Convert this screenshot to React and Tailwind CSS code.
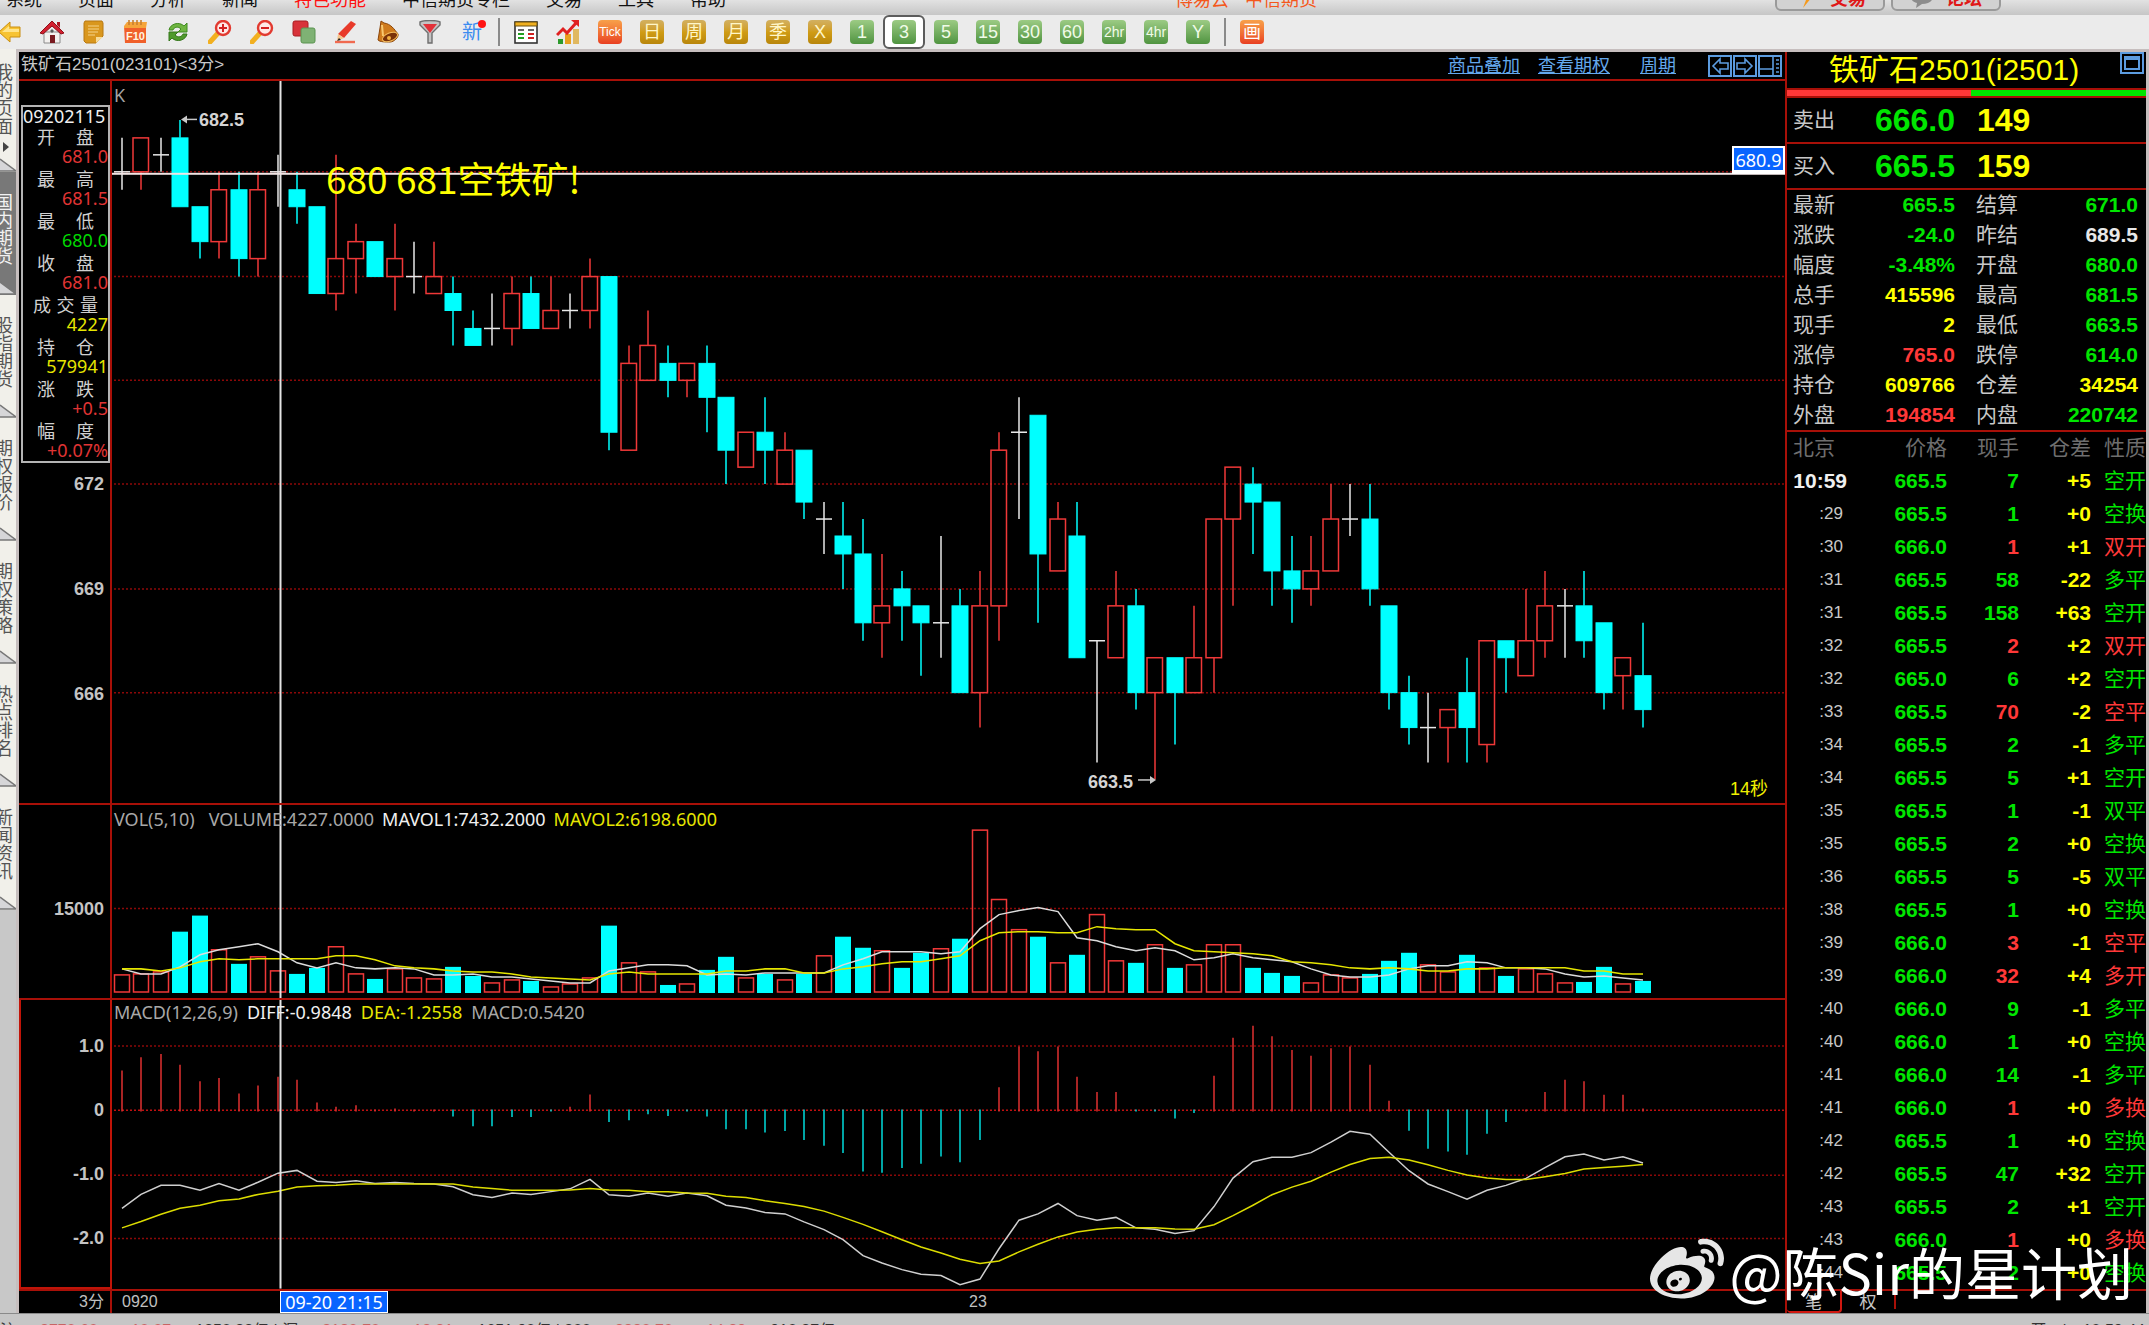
import React from "react";
import { FaWeibo } from "react-icons/fa";

const SANS = "font-['Noto_Sans','Noto_Sans_CJK_SC',sans-serif]";
const ARIAL = "font-['Liberation_Sans','Noto_Sans_CJK_SC',sans-serif]";

/* ---------- chart data: kind, high, body top, body bottom, low ---------- */
const CANDLES = [
  ["w", 682, 681, 681, 680.5], ["r", 682, 682, 681, 680.5], ["w", 682, 681.5, 681.5, 681],
  ["c", 682.5, 682, 680, 680], ["c", 680, 680, 679, 678.5], ["r", 681, 680.5, 679, 678.5],
  ["c", 681, 680.5, 678.5, 678], ["r", 681, 680.5, 678.5, 678], ["w", 681.5, 681, 681, 680],
  ["c", 681, 680.5, 680, 679.5], ["c", 680, 680, 677.5, 677.5], ["r", 681.5, 678.5, 677.5, 677],
  ["r", 679.5, 679, 678.5, 677.5], ["c", 679, 679, 678, 678], ["r", 679.5, 678.5, 678, 677],
  ["w", 679, 678, 678, 677.5], ["r", 679, 678, 677.5, 677.5], ["c", 678, 677.5, 677, 676],
  ["c", 677, 676.5, 676, 676], ["w", 677.5, 676.5, 676.5, 676], ["r", 678, 677.5, 676.5, 676],
  ["c", 678, 677.5, 676.5, 676.5], ["r", 678, 677, 676.5, 676.5], ["w", 677.5, 677, 677, 676.5],
  ["r", 678.5, 678, 677, 676.5], ["c", 678, 678, 673.5, 673], ["r", 676, 675.5, 673, 673],
  ["r", 677, 676, 675, 675], ["c", 676, 675.5, 675, 674.5], ["r", 675.5, 675.5, 675, 674.5],
  ["c", 676, 675.5, 674.5, 673.5], ["c", 674.5, 674.5, 673, 672], ["r", 673.5, 673.5, 672.5, 672.5],
  ["c", 674.5, 673.5, 673, 672], ["r", 673.5, 673, 672, 672], ["c", 673, 673, 671.5, 671],
  ["w", 671.5, 671, 671, 670], ["c", 671.5, 670.5, 670, 669], ["c", 671, 670, 668, 667.5],
  ["r", 670, 668.5, 668, 667], ["c", 669.5, 669, 668.5, 667.5], ["c", 668.5, 668.5, 668, 666.5],
  ["w", 670.5, 668, 668, 667], ["c", 669, 668.5, 666, 666], ["r", 669.5, 668.5, 666, 665],
  ["r", 673.5, 673, 668.5, 667.5], ["w", 674.5, 673.5, 673.5, 671], ["c", 674, 674, 670, 668],
  ["r", 671.5, 671, 669.5, 669.5], ["c", 671.5, 670.5, 667, 667], ["w", 667.5, 667.5, 667.5, 664],
  ["r", 669.5, 668.5, 667, 667], ["c", 669, 668.5, 666, 665.5], ["r", 667, 667, 666, 663.5],
  ["c", 667, 667, 666, 664.5], ["r", 668.5, 667, 666, 666], ["r", 671, 671, 667, 666],
  ["r", 672.5, 672.5, 671, 668.5], ["c", 672.5, 672, 671.5, 670], ["c", 671.5, 671.5, 669.5, 668.5],
  ["c", 670.5, 669.5, 669, 668], ["r", 670.5, 669.5, 669, 668.5], ["r", 672, 671, 669.5, 669.5],
  ["w", 672, 671, 671, 670.5], ["c", 672, 671, 669, 668.5], ["c", 668.5, 668.5, 666, 665.5],
  ["c", 666.5, 666, 665, 664.5], ["w", 666, 665, 665, 664], ["r", 665.5, 665.5, 665, 664],
  ["c", 667, 666, 665, 664], ["r", 667.5, 667.5, 664.5, 664], ["c", 667.5, 667.5, 667, 666],
  ["r", 669, 667.5, 666.5, 666.5], ["r", 669.5, 668.5, 667.5, 667], ["w", 669, 668.5, 668.5, 667],
  ["c", 669.5, 668.5, 667.5, 667], ["c", 668, 668, 666, 665.5], ["r", 667, 667, 666.5, 665.5],
  ["c", 668, 666.5, 665.5, 665],
];

/* Volume and MACD series share one vertical unit, see volY and macdY. */
const VOLUME = [565, 560, 556, 441, 394, 493, 532, 512, 551, 562, 545, 482, 560, 575, 548, 572, 574, 541, 567, 586, 577, 580, 599, 590, 573, 424, 530, 556, 594, 591, 550, 511, 573, 560, 577, 560, 508, 455, 485, 494, 545, 502, 490, 459, 150, 348, 434, 455, 530, 506, 392, 525, 528, 478, 545, 534, 478, 478, 545, 558, 567, 586, 565, 573, 562, 524, 502, 534, 556, 506, 543, 567, 547, 560, 586, 584, 541, 591, 580];
const VOLUME_KIND = "rrrccrcrrccrrcrrrccrrcrrrcrrcrccrcrcrccrccrcrrrcrcrrcrcrrrcccrrrcccrrcrcrrrccrc";
const MAVOL1 = [548, 560, 560, 540, 505, 491, 482, 474, 497, 530, 543, 530, 543, 547, 543, 547, 565, 565, 562, 569, 569, 574, 581, 587, 587, 552, 543, 534, 534, 539, 565, 561, 565, 557, 557, 557, 557, 535, 518, 499, 499, 499, 503, 499, 432, 391, 380, 370, 384, 456, 465, 482, 496, 487, 496, 521, 514, 504, 516, 521, 526, 548, 565, 569, 569, 565, 547, 538, 538, 526, 530, 543, 543, 548, 560, 569, 566, 573, 578];
const MAVOL2 = [547, 548, 553, 543, 526, 517, 521, 517, 517, 517, 517, 508, 508, 521, 539, 543, 547, 551, 556, 556, 560, 569, 573, 574, 577, 560, 556, 560, 560, 560, 560, 552, 551, 547, 547, 559, 559, 547, 541, 531, 526, 526, 517, 508, 465, 443, 439, 439, 443, 443, 427, 431, 435, 435, 474, 496, 499, 500, 504, 508, 526, 530, 534, 543, 548, 544, 547, 551, 552, 548, 547, 543, 543, 543, 543, 552, 552, 560, 560];
const MACD = [838, 800, 791, 822, 869, 860, 904, 881, 856, 865, 930, 942, 938, 950, 947, 950, 950, 970, 998, 998, 972, 972, 956, 942, 907, 986, 981, 964, 969, 956, 970, 1007, 1007, 1016, 1012, 1038, 1054, 1075, 1128, 1132, 1118, 1106, 1085, 1102, 1038, 886, 769, 783, 769, 856, 900, 900, 956, 956, 976, 960, 853, 744, 710, 740, 779, 796, 774, 769, 822, 925, 1011, 1063, 1071, 1080, 1020, 986, 950, 900, 865, 869, 908, 908, 947];
const DIFF = [1234, 1194, 1168, 1168, 1182, 1163, 1182, 1159, 1133, 1125, 1156, 1160, 1155, 1163, 1160, 1163, 1164, 1172, 1195, 1203, 1190, 1194, 1186, 1178, 1151, 1195, 1199, 1190, 1199, 1190, 1198, 1225, 1233, 1246, 1250, 1273, 1295, 1324, 1370, 1391, 1410, 1423, 1427, 1453, 1437, 1350, 1268, 1250, 1220, 1255, 1268, 1260, 1290, 1294, 1306, 1298, 1229, 1147, 1100, 1087, 1087, 1074, 1044, 1013, 1021, 1073, 1126, 1164, 1186, 1208, 1182, 1168, 1148, 1117, 1086, 1078, 1095, 1086, 1104];
const DEA = [1290, 1272, 1251, 1234, 1225, 1212, 1207, 1194, 1185, 1173, 1169, 1168, 1164, 1164, 1164, 1164, 1164, 1164, 1173, 1177, 1182, 1182, 1182, 1181, 1177, 1181, 1182, 1186, 1186, 1190, 1191, 1199, 1203, 1212, 1220, 1229, 1242, 1260, 1280, 1301, 1324, 1345, 1362, 1380, 1392, 1385, 1359, 1337, 1316, 1302, 1294, 1290, 1290, 1290, 1293, 1294, 1281, 1255, 1225, 1195, 1173, 1156, 1130, 1108, 1091, 1087, 1095, 1109, 1125, 1138, 1147, 1151, 1151, 1143, 1134, 1121, 1117, 1113, 1108];

const W = 1673;
const CROSS_X = 168.5;
const xAt = (i) => Math.round(9.5 + i * 19.506);
const priceY = (p) => Math.round(613 - (p - 666) * 34.78);
const volY = (v) => Math.round(v * 0.3476 - 27);
const macdY = (v) => v * 0.3476 - 221;
const points = (arr, fy) => arr.map((v, i) => `${xAt(i)},${fy(v)}`).join(" ");
const TONE = { r: "#f03838", c: "#00ffff", w: "#e8e8e8" };

function GridLine({ y, color = "#8c0808" }) {
  return <line x1="2" x2={W} y1={y} y2={y} stroke={color} strokeWidth="1.5" strokeDasharray="2 2" />;
}

function PriceChart() {
  return (
    <svg viewBox={`0 0 ${W} 724`} preserveAspectRatio="none" className="block h-full w-full">
      {[681, 678, 675, 672, 669, 666].map((p) => <GridLine key={p} y={priceY(p)} />)}
      {CANDLES.map(([k, h, t, b, l], i) => {
        const x = xAt(i);
        const c = TONE[k];
        return (
          <g key={i} stroke={c} strokeWidth="1.5" fill="none">
            {h > t && <line x1={x} x2={x} y1={priceY(h)} y2={priceY(t)} />}
            {l < b && <line x1={x} x2={x} y1={priceY(b)} y2={priceY(l)} />}
            {k === "w" && <line x1={x - 8} x2={x + 8} y1={priceY(t)} y2={priceY(t)} />}
            {k === "r" && <rect x={x - 8} y={priceY(t)} width="15.5" height={priceY(b) - priceY(t)} />}
            {k === "c" && <rect x={x - 8} y={priceY(t)} width="16" height={priceY(b) - priceY(t)} fill={c} strokeWidth="1" />}
          </g>
        );
      })}
      <rect x={CROSS_X - 1} y="0" width="2" height="724" fill="#e4e4e4" />
      <rect x="0" y="92" width={W} height="2" fill="#f0e4e4" />
      <g stroke="#c8c8c8" fill="#c8c8c8" strokeWidth="1.5">
        <path d="M71 38.5H85" /><path d="M69 38.5l6-4v8z" stroke="none" />
        <path d="M1026 700.5h14" /><path d="M1044 700.5l-6-4v8z" stroke="none" />
      </g>
    </svg>
  );
}

function VolumeChart() {
  return (
    <svg viewBox={`0 0 ${W} 192`} preserveAspectRatio="none" className="block h-full w-full">
      <GridLine y={103} />
      {VOLUME.map((v, i) => {
        const k = VOLUME_KIND[i];
        const y = volY(v);
        return k === "c"
          ? <rect key={i} x={xAt(i) - 8} y={y} width="16" height={187 - y} fill="#00ffff" />
          : <rect key={i} x={xAt(i) - 7.5} y={y} width="15" height={186 - y} fill="none" stroke="#f03838" strokeWidth="1.5" />;
      })}
      <polyline points={points(MAVOL1, volY)} fill="none" stroke="#dcdcdc" strokeWidth="1.5" />
      <polyline points={points(MAVOL2, volY)} fill="none" stroke="#e6e600" strokeWidth="1.5" />
      <rect x={CROSS_X - 1} y="0" width="2" height="192" fill="#e4e4e4" />
    </svg>
  );
}

function MacdChart() {
  const zero = macdY(953);
  return (
    <svg viewBox={`0 0 ${W} 288`} preserveAspectRatio="none" className="block h-full w-full">
      <GridLine y={46} /><GridLine y={110} color="#c01010" /><GridLine y={175} /><GridLine y={238} />
      {MACD.map((v, i) => (
        <line key={i} x1={xAt(i)} x2={xAt(i)} y1={v < 953 ? zero + 1 : zero - 1} y2={macdY(v)} stroke={v < 953 ? "#e03030" : "#00dcdc"} strokeWidth="1.5" />
      ))}
      <polyline points={points(DIFF, macdY)} fill="none" stroke="#cfcfcf" strokeWidth="1.5" />
      <polyline points={points(DEA, macdY)} fill="none" stroke="#dcdc00" strokeWidth="1.5" />
      <rect x={CROSS_X - 1} y="0" width="2" height="288" fill="#e4e4e4" />
    </svg>
  );
}

/* ---------- top bars ---------- */
const MENU = ["系统", "页面", "分析", "新闻", "特色功能", "中信期货专栏", "交易", "工具", "帮助"];

function MenuBar() {
  return (
    <nav className={`${ARIAL} relative flex h-[15px] shrink-0 items-end justify-between bg-linear-to-b from-[#e2e2e2] to-[#c6c6c6] text-lg leading-5 text-[#111]`}>
      <div className="flex gap-9 pb-[5px] pl-1.5">
        {MENU.map((m) => (
          <button key={m} type="button" className={m === "特色功能" ? "text-[#ff1010]" : ""}>{m}</button>
        ))}
      </div>
      <div className="absolute left-[1175px] bottom-[5px] flex gap-4 text-[#f4581c]"><span>博易云</span><span>中信期货</span></div>
      <div className="mr-[148px] flex gap-1.5 pb-1">
        {["交易", "论坛"].map((t, i) => (
          <button key={t} type="button" className="flex h-7 w-[110px] items-center justify-center gap-3 rounded-md border-2 border-[#9a9a9a] bg-[#d2d2d2] pt-1 font-bold text-[#e01818]">
            <svg viewBox="0 0 24 20" className="h-5 w-6">
              {i === 0
                ? <path d="M15 1L8 11h4l-3 8 9-11h-4z" fill="#f59a1c" />
                : <path d="M12 1c6 0 11 3 11 7s-5 7-11 7l-6 4 1-5C3 13 1 11 1 8c0-4 5-7 11-7z" fill="#8c8c8c" />}
            </svg>
            {t}
          </button>
        ))}
      </div>
    </nav>
  );
}

const Icon = ({ children }) => <svg viewBox="0 0 24 24" className="size-6">{children}</svg>;

const DRAWN = [
  ["后退", <Icon key="a"><path d="M1 12L12 2v5h10v10H12v5z" fill="#f7c332" stroke="#c98e10" /><path d="M4 12l7-6v3h10v3z" fill="#ffe48a" /></Icon>],
  ["首页", <Icon key="a"><path d="M4 12h16v11H4z" fill="#f3f0ee" stroke="#8a8a8a" /><path d="M0 13L12 1l12 12-3 1-9-8-9 8z" fill="#d42030" stroke="#8e1018" /><path d="M17 2h3v6l-3-3z" fill="#b01822" /><path d="M10 15h5v8h-5z" fill="#7a1a20" /><path d="M12 9l2 2-2 2-2-2z" fill="#5a5a5a" /></Icon>],
  ["记事", <Icon key="a"><path d="M3 1h17l1 2v13l-7 7H4l-2-2V3z" fill="#d9971e" stroke="#b87810" /><path d="M6 6h11M6 9h11M6 12h10M6 15h7" stroke="#f6d48a" strokeWidth="1.2" /><path d="M14 23v-6h7z" fill="#f8dc9a" /></Icon>],
  ["F10", <Icon key="a"><path d="M0 6h22v17H1z" fill="#f0602a" /><path d="M0 6l3-4h20l-1 6H0z" fill="#f6a53a" /><path d="M5 0v5M9 0v5M13 0v5M17 0v5" stroke="#c88030" strokeWidth="1.6" /><text x="2" y="20" fontSize="11" fontWeight="bold" fill="#fff6e0" fontFamily="Liberation Sans">F10</text></Icon>],
  ["刷新", <Icon key="a"><path d="M3 10c1-6 10-9 15-4l3-3v9h-9l3-3c-3-3-7-2-8 1z" fill="#6fb541" stroke="#3f8a20" /><path d="M21 14c-1 6-10 9-15 4l-3 3v-9h9l-3 3c3 3 7 2 8-1z" fill="#4f9a2c" stroke="#34761a" /></Icon>],
  ["放大", <Icon key="a"><path d="M2 22l9-10" stroke="#f2b020" strokeWidth="5" strokeLinecap="round" /><circle cx="15" cy="8" r="7" fill="#ffe9e6" stroke="#e23a30" strokeWidth="2.4" /><path d="M11 8h8M15 4v8" stroke="#d42020" strokeWidth="2" /></Icon>],
  ["缩小", <Icon key="a"><path d="M2 22l9-10" stroke="#f2b020" strokeWidth="5" strokeLinecap="round" /><circle cx="15" cy="8" r="7" fill="#ffe9e6" stroke="#e23a30" strokeWidth="2.4" /><path d="M11 8h8" stroke="#d42020" strokeWidth="2" /></Icon>],
  ["叠加", <Icon key="a"><rect x="1" y="1" width="15" height="15" rx="2" fill="#d8323a" stroke="#a81c22" /><rect x="9" y="8" width="14" height="15" rx="2" fill="#7fb274" stroke="#5b9450" /></Icon>],
  ["画线", <Icon key="a"><path d="M4 14L17 1l5 3L10 18z" fill="#e83a2a" /><path d="M4 14l6 4-7 3z" fill="#f4c48a" /><path d="M3 21l2-3 2 2z" fill="#222" /><path d="M1 22h20" stroke="#f06a50" strokeWidth="2.4" /></Icon>],
  ["预警", <Icon key="a"><path d="M5 1l3 2c7 1 10 6 14 11 1 3-4 8-8 8-5 0-10 0-12-2L4 8z" fill="#cf7a1c" stroke="#8a4408" /><ellipse cx="14" cy="17" rx="8" ry="4" transform="rotate(-22 14 17)" fill="#7a3208" stroke="#f6c060" /><path d="M6 5l1 11" stroke="#f8c870" strokeWidth="2" /><circle cx="13" cy="18" r="2" fill="#f2b040" /></Icon>],
  ["筛选", <Icon key="a"><path d="M2 2c4-2 16-2 20 0v3l-8 8v10h-4V13L2 5z" fill="#c4c4c4" stroke="#6e6e6e" strokeWidth="1.4" /><path d="M5 4h14l-7 9z" fill="#e2323a" /></Icon>],
  ["新", <span key="a" className="relative text-xl leading-6 text-[#3c8cf0]">新<i className="absolute top-0 -right-1 size-2 rounded-full bg-[#ff1414]" /></span>],
];

const Tile = ({ tone, children }) => (
  <span className={`flex size-6 items-center justify-center overflow-hidden rounded ${tone}`}>{children}</span>
);
const GOLD = "bg-linear-to-b from-[#d2b060] via-[#d09c14] to-[#b8860c] text-[#fff6c8]";
const GREEN = "bg-linear-to-b from-[#9ccb84] to-[#4f9440] text-[#f0fbe8]";
const RED = "bg-linear-to-b from-[#f7a04a] to-[#e83e22] text-white";
const PERIODS = ["1", "3", "5", "15", "30", "60", "2hr", "4hr", "Y"];

const ToolButton = ({ label, active, children }) => (
  <button type="button" aria-label={label} className={`flex h-[34px] w-[42px] items-center justify-center ${active ? "rounded-md border-2 border-[#5c5c5c] bg-white" : ""}`}>
    {children}
  </button>
);

function Toolbar() {
  return (
    <div className={`${ARIAL} flex h-[34px] shrink-0 items-center bg-[#ebebeb]`}>
      <div className="-ml-[11px] flex items-center">
        {DRAWN.map(([l, ic]) => <ToolButton key={l} label={l}>{ic}</ToolButton>)}
        <div className="flex w-3 justify-center"><i className="h-7 w-0.5 bg-[#8a8a8a]" /></div>
        <ToolButton label="报价">
          <Icon><rect x="1" y="2" width="22" height="21" fill="#fff" stroke="#333" strokeWidth="1.6" /><path d="M1 2h22v4H1z" fill="#f0b020" stroke="#6a5010" /><path d="M4 10h6M14 10h6" stroke="#333" strokeWidth="1.6" /><path d="M4 14h6M4 18h6" stroke="#20a020" strokeWidth="1.8" /><path d="M14 14h6M14 18h6" stroke="#d02020" strokeWidth="1.8" /></Icon>
        </ToolButton>
        <ToolButton label="走势">
          <Icon><rect x="2" y="19" width="5" height="5" fill="#2c9a2c" /><rect x="9" y="14" width="6" height="10" fill="#e8a020" /><rect x="17" y="9" width="6" height="15" fill="#e0b860" /><path d="M1 15l6-6 4 4 9-10" fill="none" stroke="#e02020" strokeWidth="3" /><path d="M15 0h8v7z" fill="#e02020" /></Icon>
        </ToolButton>
        <ToolButton label="Tick"><Tile tone={RED}><span className="text-xs">Tick</span></Tile></ToolButton>
        {["日", "周", "月", "季", "X"].map((t) => (
          <ToolButton key={t} label={t}><Tile tone={GOLD}><span className="text-lg leading-6">{t}</span></Tile></ToolButton>
        ))}
        {PERIODS.map((t) => (
          <ToolButton key={t} label={t} active={t === "3"}>
            <Tile tone={GREEN}><span className={t.length > 2 ? "text-sm" : "text-lg"}>{t}</span></Tile>
          </ToolButton>
        ))}
        <div className="flex w-3 justify-center"><i className="h-7 w-0.5 bg-[#8a8a8a]" /></div>
        <ToolButton label="画"><Tile tone={RED}><span className="text-lg leading-6">画</span></Tile></ToolButton>
      </div>
    </div>
  );
}

/* ---------- left page tabs ---------- */
const PAGES = ["我的页面", "国内期货", "股指期货", "期权报价", "期权策略", "热点排名", "新闻资讯"];

function PageTabs() {
  return (
    <aside className={`${ARIAL} flex w-4 shrink-0 flex-col overflow-hidden bg-[#c8c8c8]`}>
      {PAGES.map((p, i) => (
        <button key={p} type="button" className={`relative flex h-[123px] w-4 shrink-0 flex-col items-end overflow-hidden pr-[3px] text-lg leading-[18px] ${i === 0 ? "pt-[15px]" : "pt-[22px]"} ${i === 1 ? "bg-[#787878] text-[#f2f2f2]" : "bg-[#f1f0ea] text-[#555]"}`}>
          {[...p].map((ch) => <span key={ch}>{ch}</span>)}
          {i === 0 && <svg viewBox="0 0 6 10" className="mt-1.5 mr-1 h-2.5 w-1.5"><path d="M0 0l6 5-6 5z" fill="#444" /></svg>}
          <svg viewBox="0 0 16 14" className="absolute bottom-0 left-0 h-3.5 w-4"><path d="M0 1l16 12H0z" fill="#d6d6d8" /><path d="M0 1l16 12H0" fill="none" stroke="#777" strokeWidth="1.5" /></svg>
        </button>
      ))}
    </aside>
  );
}

/* ---------- chart area ---------- */
const INFO = [
  ["开盘", "681.0", "text-[#e03434]"], ["最高", "681.5", "text-[#e03434]"], ["最低", "680.0", "text-[#00d800]"],
  ["收盘", "681.0", "text-[#e03434]"], ["成交量", "4227", "text-[#e6e600]"], ["持仓", "579941", "text-[#e6e600]"],
  ["涨跌", "+0.5", "text-[#e03434]"], ["幅度", "+0.07%", "text-[#e03434]"],
];

function InfoBox() {
  return (
    <dl className={`${SANS} ml-0.5 mt-6 h-[358px] border-2 border-[#b4b4b4] text-lg leading-[19px]`}>
      <dt className="mb-0.5 text-[#f0f0f0]">09202115</dt>
      {INFO.map(([k, v, c]) => (
        <React.Fragment key={k}>
          <dt className={`flex justify-between text-[#d0d0d0] ${k.length > 2 ? "mx-2.5" : "mx-3.5"}`}>{[...k].map((ch) => <span key={ch}>{ch}</span>)}</dt>
          <dd className={`mb-1 text-right ${c}`}>{v}</dd>
        </React.Fragment>
      ))}
    </dl>
  );
}

const Axis = ({ className, children }) => (
  <div className={`${ARIAL} w-[93px] shrink-0 border-r-2 border-[#a81008] text-lg font-bold leading-5 text-[#c4c4c4] ${className}`}>{children}</div>
);
const Tick = ({ children }) => <span className="pr-1.5 text-right">{children}</span>;

function Panel({ grow, axis, chart, children }) {
  return (
    <section className={`${grow} flex min-h-0 border-t-2 border-[#a81008]`}>
      {axis}
      <div className="relative min-w-0 flex-1">
        <div className="absolute inset-0">{chart}</div>
        {children}
      </div>
    </section>
  );
}

function HeaderIcons() {
  return (
    <div className="flex text-[#5c9ce0]">
      {["M20 8h-8V4L5 11l7 7v-4h8z", "M4 8h8V4l7 7-7 7v-4H4z", "M0 14h15M15 0v22M18 5h3M18 9h3M18 13h3M18 17h3"].map((d) => (
        <button key={d} type="button" aria-label="切换" className="h-[22px] w-[25px]">
          <svg viewBox="0 0 25 22" className="block h-full w-full" fill="none" stroke="currentColor" strokeWidth="2">
            <rect x="1" y="1" width="22" height="20" /><path d={d} strokeWidth="1.6" />
          </svg>
        </button>
      ))}
    </div>
  );
}

function ChartArea() {
  return (
    <main className="flex min-w-0 flex-1 flex-col bg-black">
      <header className={`${ARIAL} flex h-[27px] shrink-0 items-center justify-between pl-0.5 text-lg text-[#c8c8c8]`}>
        <h1 className="text-[17px]">铁矿石2501(023101)&lt;3分&gt;</h1>
        <div className="flex items-center pr-0.5 text-[#64a8ec]">
          <a href="#overlay" className="mr-[18px] underline">商品叠加</a>
          <a href="#options" className="mr-[30px] underline">查看期权</a>
          <a href="#period" className="mr-8 underline">周期</a>
          <HeaderIcons />
        </div>
      </header>

      <Panel
        grow="flex-[726]"
        chart={<PriceChart />}
        axis={
          <Axis className="flex flex-col">
            <div className="font-normal"><InfoBox /></div>
            <div className="mt-[11px] flex flex-col gap-[85px]"><Tick>672</Tick><Tick>669</Tick><Tick>666</Tick></div>
          </Axis>
        }
      >
        <span className={`${SANS} absolute left-0.5 top-0.5 text-lg leading-6 text-[#a4a4a4]`}>K</span>
        <span className={`${ARIAL} absolute left-[87px] top-[29px] text-lg font-bold leading-5 text-[#d4d4d4]`}>682.5</span>
        <span className={`${ARIAL} absolute left-[976px] top-[691px] text-lg font-bold leading-5 text-[#d4d4d4]`}>663.5</span>
        <p className="absolute left-[214px] top-[77px] whitespace-nowrap font-['Noto_Sans_CJK_SC',sans-serif] text-[37px] leading-10 text-[#ffff00]">680 681空铁矿!</p>
        <span className={`${SANS} absolute right-0 top-[65px] h-7 w-[53px] border-2 border-b-4 border-white bg-[#0864ff] text-center text-lg leading-6 text-white`}>680.9</span>
        <span className={`${ARIAL} absolute right-[17px] bottom-0.5 text-lg leading-6 text-[#f0f000]`}>14秒</span>
      </Panel>

      <Panel
        grow="flex-[194]"
        chart={<VolumeChart />}
        axis={<Axis className="flex flex-col pt-[94px]"><Tick>15000</Tick></Axis>}
      >
        <div className={`${SANS} absolute left-0.5 top-0.5 flex gap-2 whitespace-nowrap text-lg leading-6 text-[#a8a8a8]`}>
          <span className="mr-1.5">VOL(5,10)</span><span>VOLUME:4227.0000</span>
          <span className="text-[#f0f0f0]">MAVOL1:7432.2000</span><span className="text-[#e6e600]">MAVOL2:6198.6000</span>
        </div>
      </Panel>

      <Panel
        grow="flex-[290]"
        chart={<MacdChart />}
        axis={<Axis className="flex flex-col gap-11 border-l-2 border-b-2 border-[#c01408] pt-9"><Tick>1.0</Tick><Tick>0</Tick><Tick>-1.0</Tick><Tick>-2.0</Tick></Axis>}
      >
        <div className={`${SANS} absolute left-0.5 top-0 flex gap-[9px] whitespace-nowrap text-lg leading-6 text-[#a8a8a8]`}>
          <span>MACD(12,26,9)</span><span className="text-[#f0f0f0]">DIFF:-0.9848</span>
          <span className="text-[#e6e600]">DEA:-1.2558</span><span>MACD:0.5420</span>
        </div>
      </Panel>

      <footer className={`${ARIAL} flex h-6 shrink-0 border-t-2 border-[#a81008] text-base leading-[22px] text-[#c0c0c0]`}>
        <div className="w-[93px] shrink-0 border-r-2 border-[#a81008] pr-1.5 text-right">3分</div>
        <div className="relative flex-1 pl-2.5">
          0920
          <span className={`${SANS} absolute left-[168px] top-0 h-[22px] w-[108px] border border-white bg-[#0864ff] text-center text-lg leading-5 text-white`}>09-20 21:15</span>
          <span className="absolute left-[857px] top-0">23</span>
        </div>
      </footer>
    </main>
  );
}

/* ---------- quote panel ---------- */
const G = "text-[#00e600]";
const R = "text-[#ff3838]";
const Y = "text-[#ffff00]";
const WH = "text-[#e8e8e8]";
const QUOTES = [
  ["最新", "665.5", G, "结算", "671.0", G], ["涨跌", "-24.0", G, "昨结", "689.5", WH],
  ["幅度", "-3.48%", G, "开盘", "680.0", G], ["总手", "415596", Y, "最高", "681.5", G],
  ["现手", "2", Y, "最低", "663.5", G], ["涨停", "765.0", R, "跌停", "614.0", G],
  ["持仓", "609766", Y, "仓差", "34254", Y], ["外盘", "194854", R, "内盘", "220742", G],
];
const TICKS = [
  ["10:59", "665.5", 7, "+5", "空开", G], [":29", "665.5", 1, "+0", "空换", G], [":30", "666.0", 1, "+1", "双开", R],
  [":31", "665.5", 58, "-22", "多平", G], [":31", "665.5", 158, "+63", "空开", G], [":32", "665.5", 2, "+2", "双开", R],
  [":32", "665.0", 6, "+2", "空开", G], [":33", "665.5", 70, "-2", "空平", R], [":34", "665.5", 2, "-1", "多平", G],
  [":34", "665.5", 5, "+1", "空开", G], [":35", "665.5", 1, "-1", "双平", G], [":35", "665.5", 2, "+0", "空换", G],
  [":36", "665.5", 5, "-5", "双平", G], [":38", "665.5", 1, "+0", "空换", G], [":39", "666.0", 3, "-1", "空平", R],
  [":39", "666.0", 32, "+4", "多开", R], [":40", "666.0", 9, "-1", "多平", G], [":40", "666.0", 1, "+0", "空换", G],
  [":41", "666.0", 14, "-1", "多平", G], [":41", "666.0", 1, "+0", "多换", R], [":42", "665.5", 1, "+0", "空换", G],
  [":42", "665.5", 47, "+32", "空开", G], [":43", "665.5", 2, "+1", "空开", G], [":43", "666.0", 1, "+0", "多换", R],
  [":44", "665.5", 2, "+0", "空换", G],
];

const BookRow = ({ label, price, size }) => (
  <div className="flex h-[46px] shrink-0 items-center border-t-2 border-[#a81008]">
    <span className="w-[72px] pl-1.5 text-[21px] text-[#c8c8c8]">{label}</span>
    <span className={`w-24 text-right text-[32px] font-bold ${G}`}>{price}</span>
    <span className={`pl-[22px] text-[32px] font-bold ${Y}`}>{size}</span>
  </div>
);

function QuotePanel() {
  return (
    <aside className={`${ARIAL} flex w-[361px] shrink-0 flex-col border-l-2 border-[#a81008] bg-black text-[21px]`}>
      <div className="relative flex h-9 shrink-0 items-center pl-[42px]">
        <h2 className="whitespace-nowrap text-3xl leading-9 text-[#ffff00]">铁矿石2501(i2501)</h2>
        <button type="button" aria-label="最大化" className="absolute right-0.5 top-0 h-[22px] w-6">
          <svg viewBox="0 0 24 22" className="block h-full w-full" fill="none" stroke="#5c9ce0" strokeWidth="2"><rect x="1" y="1" width="22" height="20" /><rect x="5" y="5" width="14" height="12" /><path d="M5 6.5h14" strokeWidth="3" /></svg>
        </button>
      </div>
      <div className="flex h-2 shrink-0 border-t-2 border-[#a81008]"><i className="flex-[183] bg-[#ff3838]" /><i className="flex-[174] bg-[#00e600]" /></div>
      <BookRow label="卖出" price="666.0" size="149" />
      <BookRow label="买入" price="665.5" size="159" />
      <div className="shrink-0 border-y-2 border-[#a81008]">
        <table className="w-full table-fixed border-collapse leading-[30px]">
          <colgroup><col className="w-[68px]" /><col className="w-[100px]" /><col className="w-[83px]" /><col /></colgroup>
          <tbody>
            {QUOTES.map(([a, v, c, b, w, d]) => (
              <tr key={a} className="h-[30px]">
                <th scope="row" className="p-0 pl-1.5 text-left font-normal text-[#c8c8c8]">{a}</th>
                <td className={`p-0 text-right font-bold ${c}`}>{v}</td>
                <th scope="row" className="p-0 pl-[21px] text-left font-normal text-[#c8c8c8]">{b}</th>
                <td className={`p-0 pr-2 text-right font-bold ${d}`}>{w}</td>
              </tr>
            ))}
          </tbody>
        </table>
      </div>
      <div className="min-h-0 flex-1 overflow-hidden">
        <table className="w-full table-fixed border-collapse leading-8">
          <colgroup><col className="w-[60px]" /><col className="w-[100px]" /><col className="w-[72px]" /><col className="w-[72px]" /><col /></colgroup>
          <thead>
            <tr className="h-8 text-right text-[#6e6e6e]">
              <th className="p-0 pl-1.5 text-left font-normal">北京</th><th className="p-0 font-normal">价格</th>
              <th className="p-0 font-normal">现手</th><th className="p-0 font-normal">仓差</th><th className="p-0 font-normal">性质</th>
            </tr>
          </thead>
          <tbody>
            {TICKS.map(([t, p, n, d, k, c], i) => (
              <tr key={i} className="h-[33px] text-right font-bold">
                <td className={`p-0 ${i === 0 ? "text-[#f0f0f0]" : "pr-1 text-[17px] font-normal text-[#c8c8c8]"}`}>{t}</td>
                <td className={`p-0 ${G}`}>{p}</td>
                <td className={`p-0 ${c}`}>{n}</td>
                <td className={`p-0 ${Y}`}>{d}</td>
                <td className={`p-0 font-normal ${c}`}>{k}</td>
              </tr>
            ))}
          </tbody>
        </table>
      </div>
      <div className="flex h-6 shrink-0 border-t-2 border-[#a81008] text-[17px] leading-6 text-[#c8c8c8]">
        <button type="button" className="w-[55px] rounded-b border-r-2 border-b-2 border-[#d01810]">笔</button>
        <button type="button" className="mb-1 w-[54px] border-r-2 border-[#a81008]">权</button>
      </div>
    </aside>
  );
}

function Watermark() {
  return (
    <div className="pointer-events-none absolute right-4 bottom-3.5 flex items-center gap-1.5 whitespace-nowrap font-['Noto_Sans_CJK_SC',sans-serif] text-[56px] leading-[80px] text-white">
      <FaWeibo className="size-[74px] text-[#e6e6e6]" />
      <span>@陈Sir的星计划</span>
    </div>
  );
}

export default function App() {
  return (
    <div className="relative flex h-screen flex-col overflow-hidden bg-[#c8c8c8]">
      <MenuBar />
      <Toolbar />
      <div className="flex min-h-0 flex-1">
        <PageTabs />
        <div className="flex min-w-0 flex-1 border-x-[3px] border-t-[3px] border-[#c6bebe]">
          <ChartArea />
          <QuotePanel />
        </div>
      </div>
      <footer className={`${ARIAL} flex h-3 shrink-0 justify-between overflow-hidden border-t border-[#8a8a8a] bg-[#c6c6c6] pt-[7px] text-base leading-5 text-[#333]`}>
        <div className="flex gap-6 whitespace-nowrap">
          <span>沪</span><span className="text-[#c86464]">2770.60</span><span className="text-[#c86464]">+10.07</span><span>1350.83亿 | 深</span>
          <span className="text-[#c86464]">8180.70</span><span className="text-[#c86464]">+12.31</span><span>1651.90亿 | 300</span>
          <span className="text-[#c86464]">3220.70</span><span className="text-[#c86464]">+14.39</span><span>910.37亿</span>
        </div>
        <div className="flex gap-4 pr-1"><span>开</span><span>|</span><span>10:59:44</span></div>
      </footer>
      <Watermark />
    </div>
  );
}
